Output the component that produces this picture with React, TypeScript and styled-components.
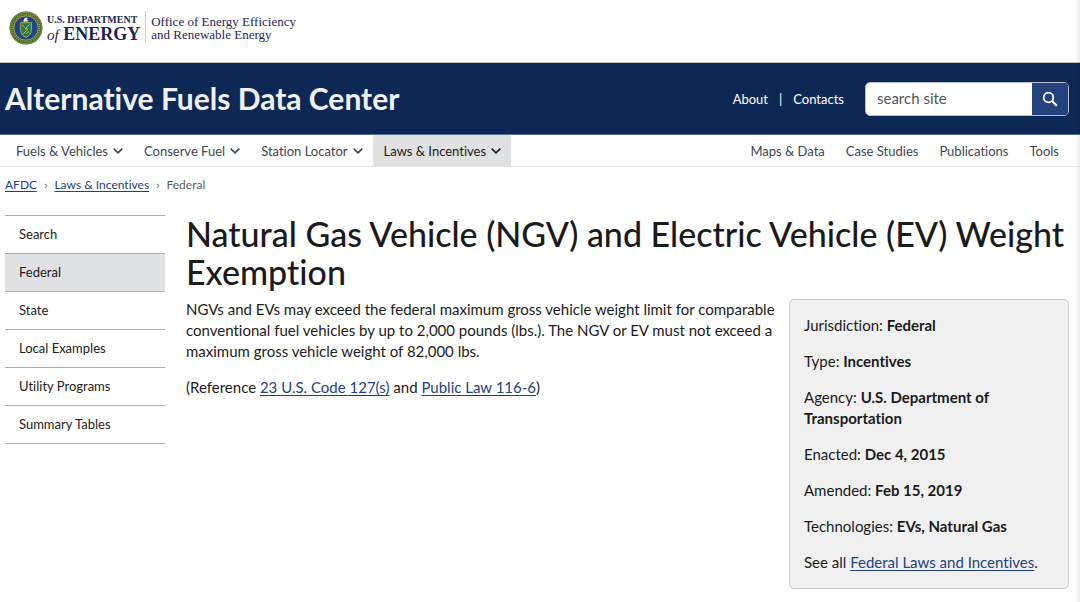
import React from "react";
import styled, { createGlobalStyle, css } from "styled-components";

const GlobalStyle = createGlobalStyle`
  *, *::before, *::after { box-sizing: border-box; }
  body {
    margin: 0;
    background: #fff;
    color: #1b1b1b;
    font-family: Lato, "Open Sans", sans-serif;
    font-size: 15px;
    line-height: 21px;
    font-variant-ligatures: none;
  }
  p, h1, ul, ol { margin: 0; padding: 0; }
  ul, ol { list-style: none; }
  a { color: #22427f; text-underline-offset: 2px; }
`;

const Page = styled.div`
  position: relative;
  min-height: 100vh;
  &::after {
    content: "";
    position: absolute;
    inset: 0 0 0 auto;
    width: 5px;
    background: linear-gradient(to right, rgba(0, 0, 0, 0), rgba(0, 0, 0, 0.07));
    pointer-events: none;
  }
`;

const AgencyHeader = styled.header`
  display: flex;
  height: 63px;
  padding: 11px 9px 0;
  border-bottom: 1px solid #c4c8ce;
`;

const AgencyLink = styled.a`
  display: flex;
  align-items: flex-start;
  height: 34px;
  color: #1d2352;
  text-decoration: none;
  font-family: "Liberation Serif", serif;
`;

const Department = styled.span`
  display: flex;
  flex-direction: column;
  margin-left: 4px;
  padding-top: 3px;
  padding-right: 5px;
`;

const DepartmentTop = styled.span`
  font-size: 10px;
  font-weight: 700;
  line-height: 12px;
`;

const DepartmentName = styled.span`
  font-size: 18px;
  font-weight: 700;
  line-height: 17px;
  i { font-size: 15px; font-weight: 400; }
`;

const Office = styled.span`
  height: 32px;
  padding: 4px 0 0 5px;
  border-left: 1px solid #d6cf86;
  font-size: 13px;
  line-height: 13px;
  color: #1f2558;
`;

const Banner = styled.div`
  display: flex;
  align-items: center;
  justify-content: space-between;
  height: 72px;
  padding: 0 11px 0 5px;
  background: #0e2856;
  border-bottom: 1px solid #5c6d8f;
`;

const SiteTitle = styled.a`
  padding-bottom: 2px;
  color: #f0f0f0;
  font-size: 30px;
  font-weight: 700;
  line-height: 36px;
  text-decoration: none;
`;

const BannerTools = styled.div`
  display: flex;
  align-items: center;
`;

const UtilityList = styled.ul`
  display: flex;
  margin-right: 21px;
  font-size: 13px;
  line-height: 18px;
  color: #fff;
  li + li::before { content: "|"; margin: 0 11px; }
  a { color: #fff; text-decoration: none; }
`;

const SearchForm = styled.form`
  display: flex;
  width: 204px;
  height: 34px;
  overflow: hidden;
  border: 1px solid #b5bccb;
  border-radius: 5px;
`;

const SearchInput = styled.input`
  flex: 1;
  min-width: 0;
  padding: 0 11px;
  border: 0;
  background: #fff;
  font: inherit;
  &::placeholder { color: #555; opacity: 1; }
`;

const SearchButton = styled.button`
  display: flex;
  align-items: center;
  justify-content: center;
  width: 36px;
  padding: 0;
  border: 0;
  background: #24427c;
  color: #fff;
`;

const MainNav = styled.nav`
  display: flex;
  justify-content: space-between;
  height: 32px;
  padding: 0 11px 0 5px;
  border-bottom: 1px solid #dfe1e2;
`;

const NavGroup = styled.div`
  display: flex;
`;

const navItem = css`
  display: flex;
  align-items: center;
  padding: 0 10px 0 11px;
  font-size: 13px;
  line-height: 18px;
`;

const MenuButton = styled.button<{ $active?: boolean }>`
  ${navItem}
  gap: 5px;
  border: 0;
  font-family: inherit;
  font-variant-ligatures: none;
  background: ${(p) => (p.$active ? "#dfe1e2" : "transparent")};
  color: ${(p) => (p.$active ? "#1b1b1b" : "#3d4551")};
`;

const NavLink = styled.a`
  ${navItem}
  color: #3d4551;
  text-decoration: none;
`;

const Breadcrumb = styled.ol`
  display: flex;
  padding: 9px 5px 0;
  font-size: 12px;
  line-height: 18px;
  color: #565c65;
  li + li::before { content: "›"; margin: 0 7px; }
`;

const Columns = styled.div`
  display: grid;
  grid-template-columns: 160px minmax(0, 1fr);
  column-gap: 21px;
  align-items: start;
  padding: 21px 11px 14px 5px;
`;

const SideList = styled.ul`
  border-top: 1px solid #a9aeb1;
`;

const SideLink = styled.a<{ $active?: boolean }>`
  display: block;
  padding: 9px 14px 10px;
  border-bottom: 1px solid #a9aeb1;
  background: ${(p) => (p.$active ? "#dfe1e2" : "transparent")};
  color: #1b1b1b;
  font-size: 13px;
  line-height: 18px;
  text-decoration: none;
`;

const Title = styled.h1`
  margin-bottom: 8px;
  font-size: 34px;
  font-weight: 500;
  line-height: 38px;
`;

const Article = styled.div`
  display: grid;
  grid-template-columns: minmax(0, 1fr) 280px;
  column-gap: 10px;
  align-items: start;
`;

const Copy = styled.div`
  display: grid;
  row-gap: 15px;
`;

const Facts = styled.aside`
  display: grid;
  row-gap: 15px;
  padding: 15px 14px;
  border: 1px solid #cfcfcf;
  border-radius: 5px;
  background: #f0f0f0;
`;

const Seal = () => (
  <svg width="34" height="34" viewBox="0 0 34 34" aria-label="Department of Energy seal">
    <circle cx="17" cy="17" r="16.5" fill="#42682f" />
    <circle cx="17" cy="17" r="15.8" fill="none" stroke="#7d8a3a" strokeWidth="1" />
    <circle cx="17" cy="17" r="13.7" fill="none" stroke="#a39f4d" strokeWidth="1.6" strokeDasharray="1 1.2" />
    <circle cx="17" cy="17" r="12.2" fill="#1d4687" stroke="#c2b44c" strokeWidth="0.8" />
    <path d="M14.5 9.5 15.5 7.2 17.4 6.6 18.8 7.6 18 8.4 19.4 10.6 14.6 10.8Z" fill="#e8edf2" />
    <path d="M11.6 11.7h10.8v7.6c0 3.6-2.6 5.6-5.4 7.2-2.8-1.6-5.4-3.6-5.4-7.2Z" fill="#2e7746" stroke="#c4b54c" strokeWidth="0.9" />
    <path d="m20.6 13.2-4.4 4.6h2.6l-4.6 5.4M13.2 14l2.4 2M17.4 22.6l2.6-2.4" fill="none" stroke="#c9bf5a" strokeWidth="0.9" />
  </svg>
);

const Chevron = () => (
  <svg width="10" height="8" viewBox="0 0 10 8" aria-hidden="true">
    <path d="M.7 1.6 5 5.9 9.3 1.6" fill="none" stroke="currentColor" strokeWidth="1.6" />
  </svg>
);

const SearchIcon = () => (
  <svg width="16" height="16" viewBox="0 0 16 16" aria-hidden="true">
    <circle cx="6.5" cy="6.5" r="4.8" fill="none" stroke="currentColor" strokeWidth="1.8" />
    <path d="m10 10 4.8 4.8" stroke="currentColor" strokeWidth="2.2" />
  </svg>
);

const menus = ["Fuels & Vehicles", "Conserve Fuel", "Station Locator", "Laws & Incentives"];
const links = ["Maps & Data", "Case Studies", "Publications", "Tools"];
const sections = ["Search", "Federal", "State", "Local Examples", "Utility Programs", "Summary Tables"];
const facts = [
  ["Jurisdiction", "Federal"],
  ["Type", "Incentives"],
  ["Agency", "U.S. Department of Transportation"],
  ["Enacted", "Dec 4, 2015"],
  ["Amended", "Feb 15, 2019"],
  ["Technologies", "EVs, Natural Gas"],
];

export default function App() {
  return (
    <Page>
      <GlobalStyle />
      <AgencyHeader>
        <AgencyLink href="#">
          <Seal />
          <Department>
            <DepartmentTop>U.S. DEPARTMENT</DepartmentTop>
            <DepartmentName><i>of</i> ENERGY</DepartmentName>
          </Department>
          <Office>
            Office of Energy Efficiency
            <br />
            and Renewable Energy
          </Office>
        </AgencyLink>
      </AgencyHeader>

      <Banner>
        <SiteTitle href="#">Alternative Fuels Data Center</SiteTitle>
        <BannerTools>
          <UtilityList>
            <li><a href="#">About</a></li>
            <li><a href="#">Contacts</a></li>
          </UtilityList>
          <SearchForm role="search">
            <SearchInput type="search" aria-label="Search site" placeholder="search site" />
            <SearchButton type="submit" aria-label="Search"><SearchIcon /></SearchButton>
          </SearchForm>
        </BannerTools>
      </Banner>

      <MainNav>
        <NavGroup>
          {menus.map((m) => (
            <MenuButton key={m} type="button" $active={m === "Laws & Incentives"}>
              {m}
              <Chevron />
            </MenuButton>
          ))}
        </NavGroup>
        <NavGroup>
          {links.map((l) => <NavLink key={l} href="#">{l}</NavLink>)}
        </NavGroup>
      </MainNav>

      <Breadcrumb>
        <li><a href="#">AFDC</a></li>
        <li><a href="#">Laws &amp; Incentives</a></li>
        <li>Federal</li>
      </Breadcrumb>

      <Columns>
        <SideList>
          {sections.map((s) => (
            <li key={s}><SideLink href="#" $active={s === "Federal"}>{s}</SideLink></li>
          ))}
        </SideList>
        <main>
          <Title>Natural Gas Vehicle (NGV) and Electric Vehicle (EV) Weight Exemption</Title>
          <Article>
            <Copy>
              <p>
                NGVs and EVs may exceed the federal maximum gross vehicle weight limit for comparable
                conventional fuel vehicles by up to 2,000 pounds (lbs.). The NGV or EV must not exceed a
                maximum gross vehicle weight of 82,000 lbs.
              </p>
              <p>
                (Reference <a href="#">23 U.S. Code 127(s)</a> and <a href="#">Public Law 116-6</a>)
              </p>
            </Copy>
            <Facts>
              {facts.map(([label, value]) => (
                <p key={label}>{label}: <strong>{value}</strong></p>
              ))}
              <p>See all <a href="#">Federal Laws and Incentives</a>.</p>
            </Facts>
          </Article>
        </main>
      </Columns>
    </Page>
  );
}
